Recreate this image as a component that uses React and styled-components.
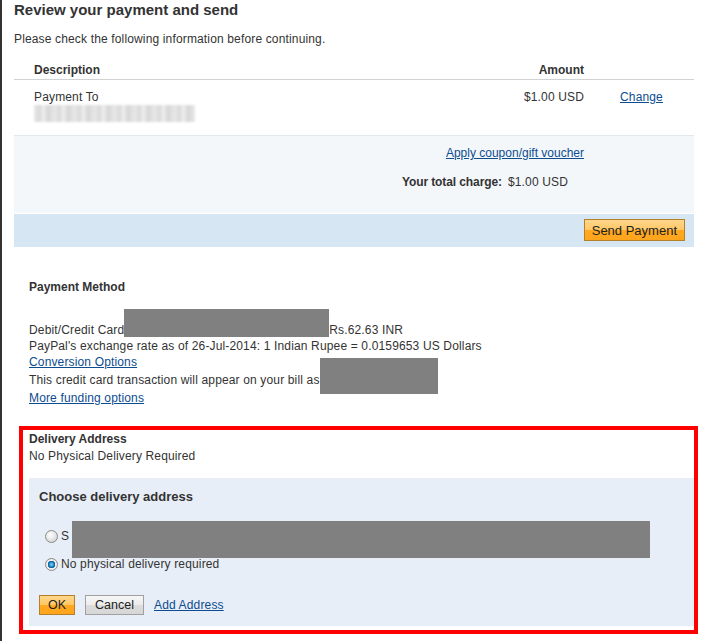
import React from 'react';
import styled, { createGlobalStyle, css } from 'styled-components';

const GlobalStyle = createGlobalStyle`
  html, body {
    margin: 0;
    padding: 0;
    background: #fff;
  }
  body {
    font-family: "Liberation Sans", Arial, sans-serif;
    font-size: 12px;
    letter-spacing: 0.15px;
    color: #333;
  }
`;

const Page = styled.div`
  width: 680px;
  min-height: 641px;
  border-left: 2px solid #333;
  padding: 0 13px 0 12px;
`;

const Title = styled.h2`
  margin: 0;
  font-size: 15px;
  line-height: 20px;
  font-weight: bold;
  letter-spacing: 0;
  color: #333;
`;

const Intro = styled.p`
  margin: 11px 0 0;
  line-height: 16px;
`;

const Link = styled.a`
  color: #0c4c8f;
  text-decoration: underline;
  cursor: pointer;
`;

const Grid = styled.div`
  display: grid;
  grid-template-columns: 1fr auto 110px;
  padding-left: 20px;
`;

const HeadRow = styled(Grid)`
  margin-top: 14px;
  height: 18px;
  line-height: 18px;
  font-weight: bold;
  letter-spacing: 0;
  border-bottom: 1px solid #cfd3d6;
`;

const ItemRow = styled(Grid)`
  padding-top: 9px;
  padding-bottom: 13px;
  line-height: 16px;
  border-bottom: 1px solid #e3e8ed;
`;

const Cell = styled.div`
  text-align: ${(p) => (p.$right ? 'right' : 'left')};
  padding-left: ${(p) => (p.$link ? '36px' : '0')};
`;

const Blurred = styled.div`
  width: 161px;
  height: 17px;
  background: repeating-linear-gradient(
    90deg,
    #e8e8e8 0px,
    #d9d9d9 6px,
    #f0f0f0 9px,
    #d6d6d6 14px,
    #e6e6e6 20px
  );
  filter: blur(1.2px);
`;

const Summary = styled.div`
  background: #f4f7fa;
  padding: 9px 0 23px;
  line-height: 16px;
`;

const CouponRow = styled(Grid)`
  letter-spacing: 0;
`;

const TotalRow = styled.div`
  display: flex;
  justify-content: flex-end;
  gap: 6px;
  margin-top: 13px;
  padding-right: 126px;
`;

const Label = styled.span`
  font-weight: bold;
  letter-spacing: -0.1px;
`;

const ActionBand = styled.div`
  background: #d6e6f2;
  display: flex;
  justify-content: flex-end;
  padding: 5px 9px 6px 0;
  margin-top: 1px;
`;

const orange = css`
  background: linear-gradient(#ffd68d 0%, #ffc865 48%, #ffa820 52%, #ffa51d 100%);
  border: 1px solid #b5802a;
`;

const grey = css`
  background: linear-gradient(#f7f7f7 0%, #ececec 48%, #dcdcdc 52%, #d6d6d6 100%);
  border: 1px solid #a0a0a0;
`;

const Button = styled.button`
  font-family: "Liberation Sans", Arial, sans-serif;
  font-size: ${(p) => (p.$big ? '13px' : '12.5px')};
  letter-spacing: 0;
  color: #222;
  height: ${(p) => (p.$big ? '22px' : '20px')};
  padding: 0 ${(p) => p.$pad}px;
  border-radius: 0;
  cursor: pointer;
  ${(p) => (p.$primary ? orange : grey)}
`;

const Section = styled.div`
  padding-left: 15px;
  margin-top: 32px;
  line-height: 16px;
`;

const SectionTitle = styled.div`
  font-weight: bold;
  letter-spacing: 0;
  line-height: 16px;
`;

const MethodText = styled.div`
  margin-top: 14px;
  line-height: 16px;
`;

const InlineBlock = styled.span`
  display: inline-block;
  width: ${(p) => p.$w}px;
  height: ${(p) => p.$h}px;
  background: #808080;
  vertical-align: ${(p) => p.$va}px;
`;

const Overlay = styled.span`
  display: inline-block;
  position: relative;
  width: ${(p) => p.$w}px;
  height: 16px;
  vertical-align: top;
`;

const OverlayFill = styled.span`
  position: absolute;
  left: 0;
  right: 0;
  top: ${(p) => p.$top}px;
  height: ${(p) => p.$h}px;
  background: #808080;
`;

const BillLine = styled.div`
  line-height: 16px;
  margin: 2px 0;
`;

const Highlight = styled.div`
  margin: 20px 0 0 5px;
  width: 665px;
  border: 4px solid #ff0000;
  padding: 1px 0 4px 6px;
  line-height: 18px;
`;

const Panel = styled.div`
  margin-top: 13px;
  background: #e8eef7;
  padding: 11px 0 11px 10px;
  line-height: 16px;
`;

const PanelTitle = styled.div`
  font-weight: bold;
  font-size: 13px;
  letter-spacing: 0;
  line-height: 16px;
`;

const Option = styled.label`
  display: flex;
  align-items: center;
  gap: 3px;
  height: 18px;
  margin-top: ${(p) => p.$mt}px;
  padding-left: 6px;
  font-size: 12px;
  position: relative;
`;

const Radio = styled.span`
  width: 11px;
  height: 11px;
  border-radius: 50%;
  border: 1px solid #8a8a8a;
  background: ${(p) =>
    p.$checked
      ? 'radial-gradient(circle, #8fd8f8 0, #1a7fc0 2.5px, #0d5d98 3.5px, #f2f2f2 4px, #dcdcdc 100%)'
      : 'radial-gradient(circle at 40% 35%, #ffffff 0, #e6e6e6 50%, #c4c4c4 100%)'};
  flex: none;
`;

const Buttons = styled.div`
  display: flex;
  align-items: center;
  gap: 10px;
  margin-top: 22px;
`;

export default function App() {
  return (
    <>
      <GlobalStyle />
      <Page>
        <Title>Review your payment and send</Title>
        <Intro>Please check the following information before continuing.</Intro>

        <HeadRow>
          <Cell>Description</Cell>
          <Cell $right>Amount</Cell>
          <Cell />
        </HeadRow>
        <ItemRow>
          <Cell>
            Payment To
            <Blurred />
          </Cell>
          <Cell $right>$1.00 USD</Cell>
          <Cell $link>
            <Link>Change</Link>
          </Cell>
        </ItemRow>

        <Summary>
          <CouponRow>
            <Cell />
            <Cell $right>
              <Link>Apply coupon/gift voucher</Link>
            </Cell>
            <Cell />
          </CouponRow>
          <TotalRow>
            <Label>Your total charge:</Label>
            <span>$1.00 USD</span>
          </TotalRow>
        </Summary>

        <ActionBand>
          <Button $primary $big $pad={7}>Send Payment</Button>
        </ActionBand>

        <Section>
          <SectionTitle>Payment Method</SectionTitle>
          <MethodText>
            Debit/Credit Card
            <InlineBlock $w={205} $h={28} $va={-3} />
            Rs.62.63 INR
          </MethodText>
          <div>PayPal's exchange rate as of 26-Jul-2014: 1 Indian Rupee = 0.0159653 US Dollars</div>
          <div>
            <Link>Conversion Options</Link>
          </div>
          <BillLine>
            This credit card transaction will appear on your bill as
            <Overlay $w={118}>
              <OverlayFill $top={-14} $h={36} />
            </Overlay>
          </BillLine>
          <div>
            <Link>More funding options</Link>
          </div>
        </Section>

        <Highlight>
          <SectionTitle>Delivery Address</SectionTitle>
          <div>No Physical Delivery Required</div>
          <Panel>
            <PanelTitle>Choose delivery address</PanelTitle>
            <Option $mt={22}>
              <Radio />
              S
              <Overlay $w={578}>
                <OverlayFill $top={-7} $h={37} />
              </Overlay>
            </Option>
            <Option $mt={10}>
              <Radio $checked />
              No physical delivery required
            </Option>
            <Buttons>
              <Button $primary $pad={8}>OK</Button>
              <Button $pad={9}>Cancel</Button>
              <Link>Add Address</Link>
            </Buttons>
          </Panel>
        </Highlight>
      </Page>
    </>
  );
}
